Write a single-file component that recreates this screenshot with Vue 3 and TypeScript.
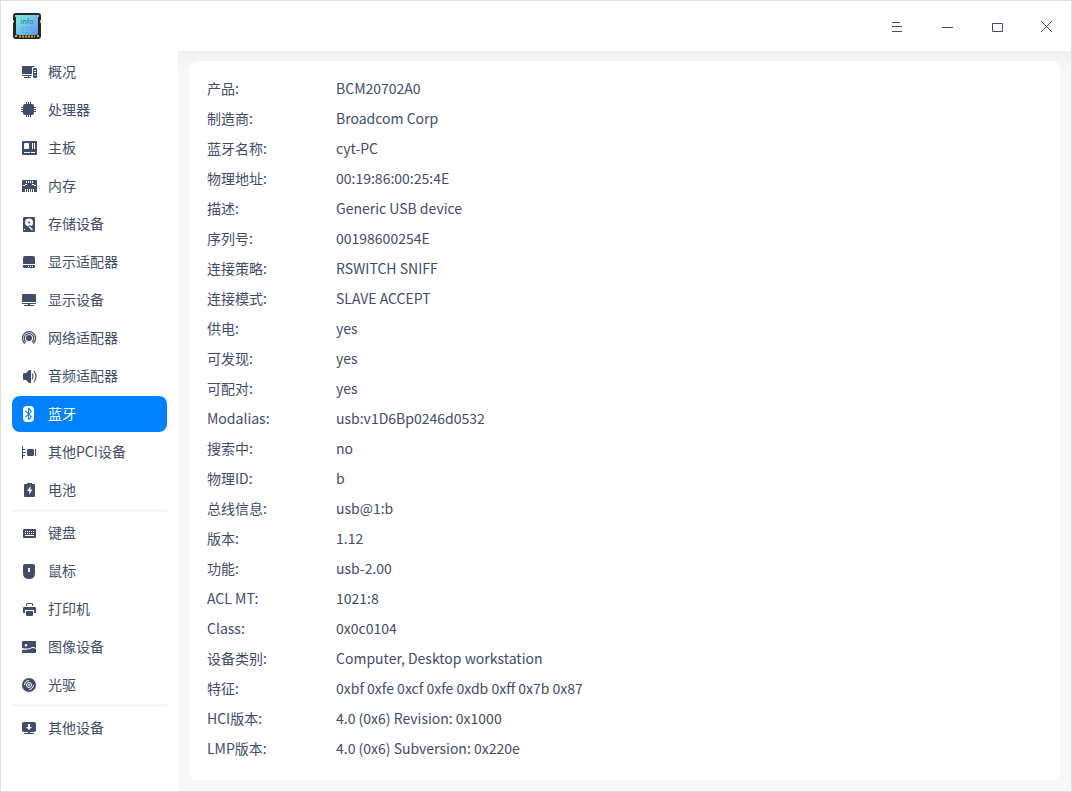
<script setup lang="ts">
import { ref } from 'vue'

interface Device {
  id: string
  label: string
}

interface Property {
  name: string
  value: string
}

const groups: Device[][] = [
  [
    { id: 'overview', label: '概况' },
    { id: 'cpu', label: '处理器' },
    { id: 'board', label: '主板' },
    { id: 'memory', label: '内存' },
    { id: 'storage', label: '存储设备' },
    { id: 'gpu', label: '显示适配器' },
    { id: 'monitor', label: '显示设备' },
    { id: 'network', label: '网络适配器' },
    { id: 'audio', label: '音频适配器' },
    { id: 'bluetooth', label: '蓝牙' },
    { id: 'pci', label: '其他PCI设备' },
    { id: 'battery', label: '电池' },
  ],
  [
    { id: 'keyboard', label: '键盘' },
    { id: 'mouse', label: '鼠标' },
    { id: 'printer', label: '打印机' },
    { id: 'image', label: '图像设备' },
    { id: 'optical', label: '光驱' },
  ],
  [{ id: 'other', label: '其他设备' }],
]

// Each glyph is drawn on a 16 × 16 grid; holes are cut with the even-odd rule.
const glyphs: Record<string, string> = {
  overview:
    'M2 2H13Q14 2 14 3H12Q11 3 11 4V10H1V3Q1 2 2 2ZM1 11H11V12H8V13H10V14H3V13H7V12H1ZM13 4H15Q16 4 16 5V13Q16 14 15 14H13Q12 14 12 13V5Q12 4 13 4ZM13 6V7H15V6ZM13 8V9H15V8ZM13.5 11V12H14.5V11Z',
  cpu:
    'M4 2H11Q13 2 13 4V11Q13 13 11 13H4Q2 13 2 11V4Q2 2 4 2ZM5 0H6V2H5ZM7 0H8V2H7ZM9 0H10V2H9ZM5 13H6V15H5ZM7 13H8V15H7ZM9 13H10V15H9ZM0 5H2V6H0ZM0 7H2V8H0ZM0 9H2V10H0ZM13 5H15V6H13ZM13 7H15V8H13ZM13 9H15V10H13Z',
  board:
    'M2 1H15Q16 1 16 2V14Q16 15 15 15H2Q1 15 1 14V2Q1 1 2 1ZM4 3Q3 3 3 4V8Q3 9 4 9H7Q8 9 8 8V4Q8 3 7 3ZM11 3V9H12V3ZM13 3V9H14V3ZM3 12V13H9V12ZM10 12V13H14V12Z',
  memory:
    'M2 2H15Q16 2 16 3V14H13V11H12V14H11V11H10V14H9V11H8V14H7V11H6V14H5V11H4V14H1V3Q1 2 2 2ZM5 3V5H6V3ZM7 3V5H8V3ZM9 3V5H10V3ZM11 3V5H12V3ZM2 7H4V6H6V7H4V8H2ZM15 7H13V6H11V7H13V8H15Z',
  storage:
    'M3 1H13Q14 1 14 2V15Q14 16 13 16H3Q2 16 2 15V2Q2 1 3 1ZM8 2.5A4 4 0 0 0 4 6.5A4 4 0 0 0 7 10.4L8.5 9L11 10Q12 8.5 12 6.5A4 4 0 0 0 8 2.5ZM8 5.5A1 1 0 0 1 8 7.5A1 1 0 0 1 8 5.5ZM8.5 10L7.7 11L11 14.5L12 13.5ZM3 13V14H4V13Z',
  gpu:
    'M4 2H12Q14 2 14 4V10H2V4Q2 2 4 2ZM2 11H14V13Q14 14 13 14H3Q2 14 2 13ZM7 12V13H8V12ZM9 12V13H10V12ZM11 12V13H12V12Z',
  monitor:
    'M2 2H14Q15 2 15 3V10H1V3Q1 2 2 2ZM1 11H15V12H9V13H13V14H3V13H7V12H1Z',
  bluetooth:
    'M6 0H9Q13 0 13 4V12Q13 16 9 16H6Q2 16 2 12V4Q2 0 6 0ZM7 2V6.5L4.5 4.5L4 5.2L7 8L4 10.8L4.5 11.5L7 9.5V14H8L11 11L8.5 8L11 5L8 2ZM8 4L9.5 5.2L8 7ZM8 9L9.5 11L8 12.5Z',
  pci:
    'M1 2H2V5H4V6H2V8H5V9H2V11H4V12H2V15H1ZM7 5H12L13 6V11L12 12H7L6 11V6ZM14 5H15V12H14Z',
  battery:
    'M6 1H11V2H13Q14 2 14 3V14Q14 15 13 15H4Q3 15 3 14V3Q3 2 4 2H6ZM9.5 4L6 9H8.2V12.5L11.5 7.5H9.5Z',
  keyboard:
    'M3 4H14Q15 4 15 5V12Q15 13 14 13H3Q2 13 2 12V5Q2 4 3 4ZM4 6V7H5V6ZM6 6V7H7V6ZM8 6V7H9V6ZM10 6V7H11V6ZM12 6V7H13V6ZM4 8V9H5V8ZM6 8V9H7V8ZM8 8V9H9V8ZM10 8V9H11V8ZM12 8V9H13V8ZM4 10V11H13V10Z',
  mouse:
    'M4 1H12Q14 1 14 3V10Q14 16 8 16Q2 16 2 10V3Q2 1 4 1ZM7 5V9H9V5Z',
  printer:
    'M6 2H11L12 3V5H11V3H6V5H5V3ZM3 6H14Q15 6 15 7V12H13V9H4V12H2V7Q2 6 3 6ZM5 10H12V14Q12 15 11 15H6Q5 15 5 14Z',
  image:
    'M2 2H14Q15 2 15 3V9Q12 7 9 9Q5 10 1 9V3Q1 2 2 2ZM5 5A1.3 1.3 0 0 0 5 7.6A1.3 1.3 0 0 0 5 5ZM1 11Q5 11 9 10Q12 8 15 10V13Q15 14 14 14H2Q1 14 1 13Z',
  other:
    'M3 2H13Q15 2 15 4V10Q15 12 13 12H3Q1 12 1 10V4Q1 2 3 2ZM7 4V7H5L8 10L11 7H9V4ZM7 12H9V13H13V14H3V13H7Z',
}

const selected = ref('bluetooth')

const properties: Property[] = [
  { name: '产品', value: 'BCM20702A0' },
  { name: '制造商', value: 'Broadcom Corp' },
  { name: '蓝牙名称', value: 'cyt-PC' },
  { name: '物理地址', value: '00:19:86:00:25:4E' },
  { name: '描述', value: 'Generic USB device' },
  { name: '序列号', value: '00198600254E' },
  { name: '连接策略', value: 'RSWITCH SNIFF' },
  { name: '连接模式', value: 'SLAVE ACCEPT' },
  { name: '供电', value: 'yes' },
  { name: '可发现', value: 'yes' },
  { name: '可配对', value: 'yes' },
  { name: 'Modalias', value: 'usb:v1D6Bp0246d0532' },
  { name: '搜索中', value: 'no' },
  { name: '物理ID', value: 'b' },
  { name: '总线信息', value: 'usb@1:b' },
  { name: '版本', value: '1.12' },
  { name: '功能', value: 'usb-2.00' },
  { name: 'ACL MT', value: '1021:8' },
  { name: 'Class', value: '0x0c0104' },
  { name: '设备类别', value: 'Computer, Desktop workstation' },
  { name: '特征', value: '0xbf 0xfe 0xcf 0xfe 0xdb 0xff 0x7b 0x87' },
  { name: 'HCI版本', value: '4.0 (0x6) Revision: 0x1000' },
  { name: 'LMP版本', value: '4.0 (0x6) Subversion: 0x220e' },
]
</script>

<template>
  <div class="window">
    <header class="titlebar">
      <svg class="logo" viewBox="0 0 30 30" aria-hidden="true">
        <defs>
          <linearGradient id="chip" x1="0" y1="0" x2="1" y2="1">
            <stop offset="0" stop-color="#7ff0d0" />
            <stop offset="0.5" stop-color="#74c4f0" />
            <stop offset="1" stop-color="#5c90f8" />
          </linearGradient>
        </defs>
        <path d="M4 2H26Q29 2 29 5V9Q27 10 29 12V25Q29 28 26 28H4Q1 28 1 25V12Q3 10 1 9V5Q1 2 4 2Z" fill="#252525" />
        <g fill="#e4e4e4">
          <circle cx="4" cy="5" r="1" /><circle cx="26" cy="5" r="1" />
          <circle cx="4" cy="25" r="1" /><circle cx="26" cy="25" r="1" />
        </g>
        <rect x="4" y="4" width="22" height="20" rx="2" fill="url(#chip)" />
        <path d="M7 25.5H23" stroke="#e0a820" stroke-width="2" stroke-dasharray="2 1" />
        <text x="15" y="13" text-anchor="middle" font-size="7" font-weight="500" fill="#3f8790">info</text>
        <path d="M9 16.5H22M9 18.5H20M9 21.5H16" stroke="#4f9fc9" stroke-dasharray="3 1" opacity="0.6" />
      </svg>
      <div class="controls">
        <button type="button" aria-label="菜单">
          <svg viewBox="0 0 14 14"><path d="M3 3.5H11M3 7.5H13M3 12.5H13" /></svg>
        </button>
        <button type="button" aria-label="最小化">
          <svg viewBox="0 0 14 14"><path d="M3 8.5H14" /></svg>
        </button>
        <button type="button" aria-label="最大化">
          <svg viewBox="0 0 14 14"><path d="M3.5 4.5H13.5V12.5H3.5Z" /></svg>
        </button>
        <button type="button" aria-label="关闭">
          <svg viewBox="0 0 14 14"><path d="M2 2L13 13M13 2L2 13" /></svg>
        </button>
      </div>
    </header>

    <div class="body">
      <nav class="sidebar">
        <ul v-for="(group, index) in groups" :key="index" class="group">
          <li v-for="device in group" :key="device.id">
            <button
              type="button"
              class="item"
              :class="{ active: device.id === selected }"
              :aria-current="device.id === selected ? 'page' : undefined"
              @click="selected = device.id"
            >
              <svg class="icon" viewBox="0 0 16 16" aria-hidden="true">
                <g v-if="device.id === 'network'" fill="none" stroke="currentColor">
                  <circle cx="8" cy="8" r="3" fill="currentColor" stroke="none" />
                  <path d="M5 12A4.7 4.7 0 1 1 11 12M4 13.5A6.6 6.6 0 1 1 12 13.5" stroke-width="1.2" />
                </g>
                <g v-else-if="device.id === 'audio'">
                  <path d="M3 5H5L8 2H10V15H8L5 12H3Q2 12 2 11V6Q2 5 3 5Z" fill="currentColor" />
                  <path d="M11 5.5Q13 8.5 11 11.5M13 3Q17 8.5 13 14" fill="none" stroke="currentColor" stroke-width="1.2" />
                </g>
                <g v-else-if="device.id === 'optical'">
                  <circle cx="8" cy="8" r="7" fill="currentColor" />
                  <g fill="none" stroke="#fff">
                    <circle cx="8" cy="8" r="2.5" />
                    <path d="M3.5 8A4.5 4.5 0 0 1 8 3.5M12.5 8A4.5 4.5 0 0 1 8 12.5" />
                  </g>
                  <circle cx="8" cy="8" r="1" fill="#fff" />
                </g>
                <path v-else :d="glyphs[device.id]" fill="currentColor" fill-rule="evenodd" />
              </svg>
              <span class="label">{{ device.label }}</span>
            </button>
          </li>
        </ul>
      </nav>

      <main class="content">
        <section class="card">
          <table class="properties">
            <tbody>
              <tr v-for="property in properties" :key="property.name">
                <th scope="row">{{ property.name }}:</th>
                <td>{{ property.value }}</td>
              </tr>
            </tbody>
          </table>
        </section>
      </main>
    </div>
  </div>
</template>

<style>
body {
  margin: 0;
}
</style>

<style scoped>
* {
  box-sizing: border-box;
}

.window {
  display: flex;
  flex-direction: column;
  min-height: 100vh;
  border: 1px solid #dedede;
  background: #fff;
  color: #414d68;
  font: 14px/20px "Noto Sans CJK SC", sans-serif;
}

.titlebar {
  display: flex;
  align-items: center;
  justify-content: space-between;
  height: 50px;
  padding-left: 11px;
}

.logo {
  width: 30px;
  height: 30px;
}

.controls {
  display: flex;
}

.controls button {
  display: grid;
  place-items: center;
  width: 50px;
  height: 50px;
  padding: 0;
  border: 0;
  background: none;
  color: inherit;
}

.controls svg {
  width: 14px;
  height: 14px;
  fill: none;
  stroke: currentColor;
}

.body {
  display: flex;
  flex: 1;
}

.sidebar {
  flex: none;
  width: 177px;
  padding: 3px 11px 10px 10px;
}

.group {
  display: flex;
  flex-direction: column;
  gap: 2px;
  margin: 0;
  padding: 0 0 0 1px;
  list-style: none;
}

.group + .group {
  margin-top: 1px;
  padding-top: 3px;
  border-top: 3px solid #f6f6f6;
}

.item {
  display: flex;
  align-items: center;
  gap: 11px;
  width: 100%;
  height: 36px;
  padding: 0 9px;
  border: 0;
  border-radius: 8px;
  background: none;
  color: inherit;
  font: inherit;
  text-align: left;
  white-space: nowrap;
}

.item.active {
  background: #0081ff;
  color: #fff;
}

.icon {
  flex: none;
  width: 16px;
  height: 16px;
}

.label {
  padding-bottom: 2px;
}

.content {
  flex: 1;
  min-width: 0;
  padding: 10px 11px 11px;
  background: linear-gradient(#f0f0f0, #f8f8f8 20px);
}

.card {
  height: 100%;
  padding: 12px 18px;
  border-radius: 8px;
  background: #fff;
}

.properties {
  width: 100%;
  border-collapse: collapse;
}

.properties th,
.properties td {
  height: 30px;
  padding: 0;
  font-weight: 400;
  text-align: left;
}

.properties th {
  width: 129px;
}
</style>
